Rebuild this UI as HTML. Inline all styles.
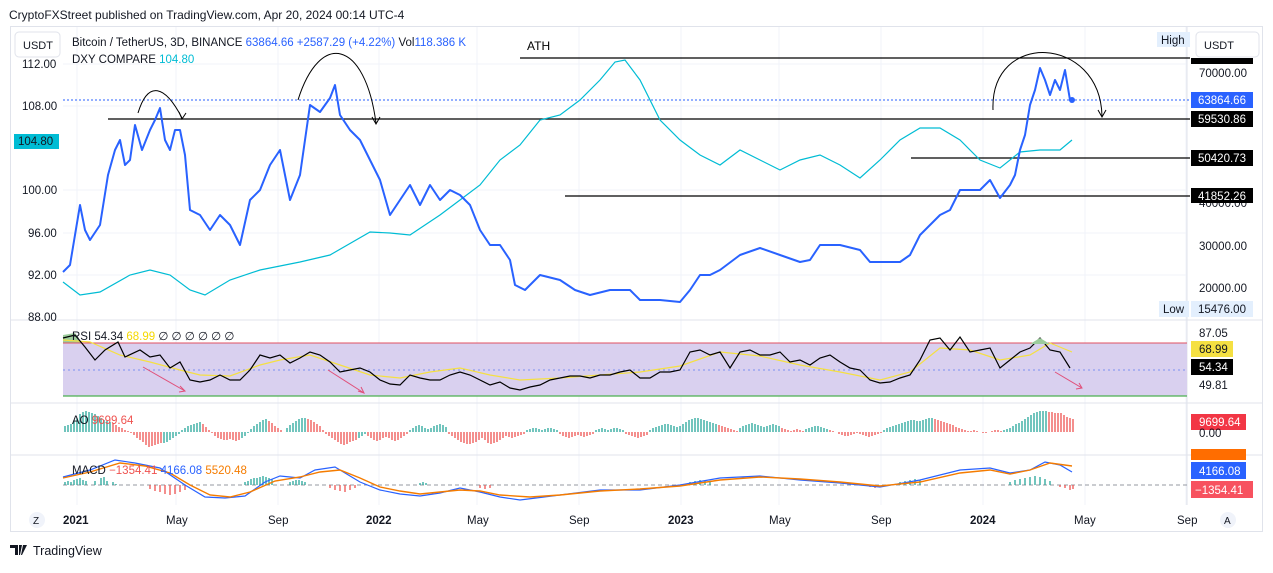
<!DOCTYPE html>
<html><head><meta charset="utf-8"><style>
body{margin:0;background:#fff;font-family:"Liberation Sans",sans-serif;}
svg text{font-family:"Liberation Sans",sans-serif;}
</style></head><body>
<svg width="1273" height="568" viewBox="0 0 1273 568" xmlns="http://www.w3.org/2000/svg">
<rect width="1273" height="568" fill="#fff"/>
<text x="9" y="19" font-size="12" fill="#131722">CryptoFXStreet published on TradingView.com, Apr 20, 2024 00:14 UTC-4</text>
<rect x="10.5" y="26.5" width="1252" height="505" fill="#fff" stroke="#e0e3eb"/>
<g stroke="#f0f3fa" stroke-width="1">
<line x1="77" y1="27" x2="77" y2="505"/><line x1="176" y1="27" x2="176" y2="505"/><line x1="278" y1="27" x2="278" y2="505"/><line x1="379" y1="27" x2="379" y2="505"/><line x1="477" y1="27" x2="477" y2="505"/><line x1="579" y1="27" x2="579" y2="505"/><line x1="681" y1="27" x2="681" y2="505"/><line x1="779" y1="27" x2="779" y2="505"/><line x1="881" y1="27" x2="881" y2="505"/><line x1="983" y1="27" x2="983" y2="505"/><line x1="1085" y1="27" x2="1085" y2="505"/><line x1="1186" y1="27" x2="1186" y2="505"/>
<line x1="63" y1="64" x2="1187" y2="64"/><line x1="63" y1="106" x2="1187" y2="106"/><line x1="63" y1="190" x2="1187" y2="190"/><line x1="63" y1="233" x2="1187" y2="233"/><line x1="63" y1="275" x2="1187" y2="275"/>
</g>
<g stroke="#e0e3eb"><line x1="11" y1="320" x2="1262" y2="320"/><line x1="11" y1="403" x2="1262" y2="403"/><line x1="11" y1="455" x2="1262" y2="455"/><line x1="1187" y1="27" x2="1187" y2="505"/></g>
<rect x="15" y="32" width="45" height="25" rx="4" fill="#fff" stroke="#e0e3eb"/>
<text x="23" y="49" font-size="11" fill="#131722">USDT</text>
<rect x="1196" y="32" width="63" height="25" rx="4" fill="#fff" stroke="#e0e3eb"/>
<text x="1204" y="49" font-size="11" fill="#131722">USDT</text>
<text x="72" y="46" font-size="11.5" fill="#131722">Bitcoin / TetherUS, 3D, BINANCE <tspan fill="#2962ff">63864.66  +2587.29 (+4.22%)</tspan> Vol<tspan fill="#2962ff">118.386 K</tspan></text>
<text x="72" y="63" font-size="11.5" fill="#131722">DXY COMPARE <tspan fill="#00bcd4">104.80</tspan></text>
<g font-size="11.5" fill="#131722">
<text x="22" y="68">112.00</text><text x="22" y="110">108.00</text><text x="22" y="194">100.00</text><text x="28" y="237">96.00</text><text x="28" y="279">92.00</text><text x="28" y="321">88.00</text>
</g>
<rect x="14" y="134" width="45" height="15" fill="#00bcd4"/><text x="18" y="145" font-size="11.5" fill="#131722">104.80</text>
<g stroke="#000" stroke-width="1.2">
<line x1="520" y1="58" x2="1190" y2="58"/><line x1="108" y1="119" x2="1190" y2="119"/><line x1="911" y1="158" x2="1190" y2="158"/><line x1="565" y1="196" x2="1190" y2="196"/>
</g>
<line x1="63" y1="100" x2="1190" y2="100" stroke="#2962ff" stroke-dasharray="2 2"/>
<text x="527" y="50" font-size="12" fill="#000">ATH</text>
<g fill="none" stroke="#000" stroke-width="1">
<path d="M138,113 C148,80 165,85 182,118"/><path d="M179,112 L182,119 L186,113"/>
<path d="M298,100 C320,30 365,40 376,123"/><path d="M372,117 L376,124 L380,117"/>
<path d="M993,110 C990,30 1100,35 1102,116"/><path d="M1098,110 L1102,117 L1106,110"/>
</g>
<polyline fill="none" stroke="#00bcd4" stroke-width="1.2" points="63,282 80,295 100,292 130,275 150,270 170,275 190,290 205,295 230,280 260,270 300,262 330,255 370,232 390,233 410,235 440,215 460,200 480,185 500,160 520,145 540,120 560,115 580,100 600,80 615,62 625,60 640,80 660,120 680,140 700,155 720,165 740,150 760,160 780,170 800,160 820,155 840,165 860,178 880,160 900,140 920,128 940,128 960,140 980,160 1000,168 1020,152 1040,150 1060,150 1072,140"/>
<polyline fill="none" stroke="#2962ff" stroke-width="2" stroke-linejoin="round" points="63,272 70,265 80,205 85,230 90,240 100,225 108,175 115,150 120,140 125,165 130,160 135,125 142,150 150,130 155,120 160,108 165,140 170,150 175,130 180,130 185,155 190,210 200,215 210,230 220,215 230,225 240,245 250,200 260,190 270,165 280,150 290,200 300,175 310,105 320,112 330,98 335,85 340,115 350,130 360,140 370,160 380,180 390,215 400,200 410,185 420,205 430,185 440,200 450,190 460,195 470,205 480,230 490,245 500,245 510,260 515,285 525,290 540,275 560,280 575,290 590,295 610,290 630,290 640,300 660,300 680,302 690,290 700,275 710,275 720,270 740,255 760,248 780,255 800,262 810,260 820,245 840,245 860,250 870,262 880,262 900,262 910,255 920,235 930,225 940,215 950,210 960,190 970,190 980,190 990,180 1000,198 1010,185 1015,175 1020,150 1025,135 1030,105 1035,90 1040,68 1045,80 1050,95 1055,80 1060,90 1065,70 1070,100 1072,100"/>
<circle cx="1072" cy="100" r="3" fill="#2962ff"/>
<rect x="1157" y="32" width="33" height="15" fill="#e3effd"/><text x="1161" y="44" font-size="11.5" fill="#131722">High</text>
<rect x="1191" y="58" width="62" height="6" fill="#000"/>
<g font-size="11.5" fill="#131722"><text x="1199" y="77">70000.00</text><text x="1199" y="207">40000.00</text><text x="1199" y="250">30000.00</text><text x="1199" y="292">20000.00</text></g>
<rect x="1191" y="92" width="62" height="16" fill="#2962ff"/><text x="1198" y="104" font-size="11.5" fill="#fff">63864.66</text>
<rect x="1191" y="111" width="62" height="16" fill="#000"/><text x="1198" y="123" font-size="11.5" fill="#fff">59530.86</text>
<rect x="1191" y="150" width="62" height="16" fill="#000"/><text x="1198" y="162" font-size="11.5" fill="#fff">50420.73</text>
<rect x="1191" y="188" width="62" height="15" fill="#000"/><text x="1198" y="200" font-size="11.5" fill="#fff">41852.26</text>
<rect x="1159" y="301" width="30" height="16" fill="#e3effd"/><text x="1163" y="313" font-size="11.5" fill="#131722">Low</text>
<rect x="1191" y="301" width="62" height="16" fill="#e3effd"/><text x="1198" y="313" font-size="11.5" fill="#131722">15476.00</text>
<rect x="63" y="343" width="1124" height="53" fill="#d9d0ef"/>
<path d="M63,343 L63,335 L75,333 L82,343 Z" fill="#9ccc9c"/>
<line x1="63" y1="343" x2="1187" y2="343" stroke="#e05060"/>
<line x1="63" y1="396" x2="1187" y2="396" stroke="#4caf50" stroke-width="1.2"/>
<line x1="63" y1="370" x2="1187" y2="370" stroke="#7b8ff0" stroke-dasharray="2 3"/>
<polyline fill="none" stroke="#f5e042" stroke-width="1.2" points="63,340 90,342 120,355 150,362 180,370 200,375 230,376 260,365 280,360 310,355 340,365 370,375 400,378 430,372 460,368 490,375 520,380 560,378 600,375 640,372 680,366 720,352 760,356 800,365 840,372 880,380 910,372 940,348 970,350 1000,360 1030,355 1050,343 1072,352"/>
<polyline fill="none" stroke="#000" stroke-width="1.2" points="63,338 75,335 85,347 95,360 105,350 118,342 125,357 140,350 150,357 160,355 170,368 180,362 190,380 200,382 210,380 220,375 230,380 240,380 250,370 260,355 270,358 280,355 290,363 300,358 310,352 320,355 330,362 340,372 350,370 360,368 370,372 380,380 390,384 400,385 410,375 420,378 430,380 440,380 450,375 460,372 470,375 480,380 490,385 500,382 510,388 520,390 530,387 540,385 550,380 560,378 570,376 580,376 590,378 600,375 610,375 620,372 630,370 640,378 650,378 660,372 670,372 680,370 690,352 700,350 710,355 720,352 730,368 740,352 750,350 760,355 770,355 780,352 790,362 800,360 810,365 820,358 830,355 840,362 850,368 860,370 870,380 880,383 890,382 900,378 910,375 920,360 930,340 940,338 950,350 960,337 970,352 980,350 990,348 1000,368 1010,360 1020,352 1030,348 1040,338 1050,350 1060,352 1070,368"/>
<path d="M1030,344 L1040,338 L1050,344 Z" fill="#9ccc9c" stroke="none"/>
<g stroke="#e0507a" fill="none" stroke-width="1"><path d="M143,367 L185,391 M180,386 L185,391 L179,392"/><path d="M328,370 L364,393 M358,391 L364,393 L361,387"/><path d="M1055,372 L1082,388 M1076,389 L1082,388 L1079,383"/></g>
<text x="72" y="340" font-size="11.5" fill="#131722">RSI 54.34 <tspan fill="#f5d800">68.99</tspan> ∅ ∅ ∅ ∅ ∅ ∅</text>
<g font-size="11.5" fill="#131722"><text x="1199" y="337">87.05</text><text x="1199" y="389">49.81</text></g>
<rect x="1191" y="341" width="42" height="16" fill="#f5e042"/><text x="1199" y="353" font-size="11.5" fill="#131722">68.99</text>
<rect x="1191" y="359" width="42" height="16" fill="#000"/><text x="1199" y="371" font-size="11.5" fill="#fff">54.34</text>
<g stroke-width="1.3">
<path stroke="#26a69a" d="M65,432V426M68,432V425M71,432V424M74,432V420M77,432V418M80,432V414M83,432V412M86,432V411M89,432V412M92,432V413M95,432V414M98,432V416M101,432V418M104,432V420M107,432V421M110,432V422"/>
<path stroke="#ef5350" d="M113,432V423M116,432V425M119,432V427M122,432V428M125,432V430M128,432V431M131,432V433M134,432V435M137,432V438M140,432V440M143,432V442M146,432V445M149,432V447M152,432V446M155,432V445M158,432V444M161,432V443"/>
<path stroke="#26a69a" d="M164,432V443M167,432V442M170,432V440M173,432V438M176,432V436M179,432V434M182,432V430"/>
<path stroke="#26a69a" d="M185,432V428M188,432V426M191,432V425M194,432V424M197,432V423M200,432V422"/>
<path stroke="#ef5350" d="M203,432V424M206,432V427M209,432V430M212,432V433M215,432V436M218,432V438M221,432V439M224,432V440M227,432V440M230,432V439M233,432V440M236,432V441M239,432V440"/>
<path stroke="#26a69a" d="M242,432V438M245,432V436M248,432V433M251,432V429M254,432V426M257,432V424M260,432V422M263,432V420M266,432V419"/>
<path stroke="#ef5350" d="M269,432V421M272,432V423M275,432V426M278,432V428M281,432V430M284,432V432"/>
<path stroke="#26a69a" d="M287,432V428M290,432V425M293,432V423M296,432V421M299,432V419M302,432V418M305,432V418"/>
<path stroke="#ef5350" d="M308,432V419M311,432V420M314,432V422M317,432V424M320,432V426M323,432V430M326,432V434M329,432V436M332,432V438M335,432V440M338,432V442M341,432V444M344,432V445M347,432V444M350,432V442M353,432V441M356,432V440"/>
<path stroke="#26a69a" d="M359,432V438M362,432V436M365,432V434"/>
<path stroke="#ef5350" d="M368,432V436M371,432V438M374,432V440M377,432V441M380,432V440M383,432V438M386,432V437M389,432V438M392,432V440M395,432V441M398,432V440M401,432V438M404,432V436M407,432V434"/>
<path stroke="#26a69a" d="M410,432V430M413,432V428M416,432V426M419,432V425M422,432V426M425,432V428M428,432V429M431,432V428M434,432V426M437,432V425M440,432V424M443,432V425M446,432V427"/>
<path stroke="#ef5350" d="M449,432V434M452,432V436M455,432V438M458,432V440M461,432V442M464,432V443M467,432V444M470,432V444M473,432V443M476,432V442M479,432V440M482,432V438M485,432V440M488,432V443M491,432V444M494,432V443M497,432V442M500,432V440M503,432V438M506,432V436M509,432V437M512,432V438M515,432V437M518,432V436M521,432V435M524,432V434"/>
<path stroke="#26a69a" d="M527,432V430M530,432V429M533,432V428M536,432V428M539,432V429M542,432V430M545,432V429M548,432V428M551,432V428M554,432V429M557,432V430"/>
<path stroke="#ef5350" d="M560,432V434M563,432V436M566,432V437M569,432V438M572,432V437M575,432V436M578,432V435M581,432V436M584,432V437M587,432V436M590,432V435M593,432V434"/>
<path stroke="#26a69a" d="M596,432V430M599,432V429M602,432V428M605,432V429M608,432V430M611,432V429M614,432V428M617,432V428M620,432V429M623,432V430"/>
<path stroke="#ef5350" d="M626,432V434M629,432V435M632,432V436M635,432V437M638,432V438M641,432V437M644,432V436M647,432V435"/>
<path stroke="#26a69a" d="M650,432V430M653,432V428M656,432V427M659,432V426M662,432V425M665,432V424M668,432V424M671,432V425M674,432V426M677,432V427M680,432V426M683,432V424M686,432V422M689,432V420M692,432V419M695,432V418M698,432V418M701,432V419M704,432V420M707,432V421M710,432V422M713,432V423M716,432V424"/>
<path stroke="#ef5350" d="M719,432V425M722,432V426M725,432V427M728,432V428M731,432V429M734,432V430M737,432V431"/>
<path stroke="#26a69a" d="M740,432V428M743,432V426M746,432V425M749,432V424M752,432V423M755,432V424M758,432V425M761,432V426M764,432V427M767,432V426M770,432V425M773,432V424M776,432V425M779,432V426"/>
<path stroke="#ef5350" d="M782,432V428M785,432V429M788,432V430M791,432V431M794,432V430M797,432V429M800,432V430M803,432V431"/>
<path stroke="#26a69a" d="M806,432V429M809,432V428M812,432V427M815,432V426M818,432V426M821,432V427M824,432V428M827,432V429"/>
<path stroke="#ef5350" d="M830,432V430M833,432V431M836,432V432M839,432V434M842,432V435M845,432V436M848,432V436M851,432V435M854,432V434M857,432V433M860,432V434M863,432V435M866,432V436M869,432V437M872,432V436M875,432V435M878,432V434M881,432V433"/>
<path stroke="#26a69a" d="M884,432V430M887,432V428M890,432V427M893,432V426M896,432V425M899,432V424M902,432V423M905,432V422M908,432V421M911,432V420M914,432V420M917,432V421M920,432V421M923,432V420M926,432V419M929,432V418M932,432V418"/>
<path stroke="#ef5350" d="M935,432V419M938,432V420M941,432V421M944,432V422M947,432V423M950,432V424M953,432V425M956,432V427M959,432V428M962,432V429M965,432V430M968,432V431M971,432V431M974,432V430M977,432V431M980,432V432M983,432V433M986,432V433M989,432V432M992,432V431M995,432V430M998,432V430M1001,432V431"/>
<path stroke="#26a69a" d="M1004,432V430M1007,432V429M1010,432V428M1013,432V426M1016,432V424M1019,432V423M1022,432V421M1025,432V419M1028,432V417M1031,432V415M1034,432V413M1037,432V412M1040,432V411M1043,432V411M1046,432V411"/>
<path stroke="#ef5350" d="M1049,432V412M1052,432V412M1055,432V413M1058,432V413M1061,432V413M1064,432V415M1067,432V417M1070,432V418M1073,432V419"/>
</g>
<text x="72" y="424" font-size="11.5" fill="#131722">AO <tspan fill="#ef5350">9699.64</tspan></text>
<rect x="1191" y="414" width="55" height="16" fill="#f23645"/><text x="1199" y="426" font-size="11.5" fill="#fff">9699.64</text>
<text x="1199" y="437" font-size="11.5" fill="#131722">0.00</text>
<line x1="63" y1="485" x2="1187" y2="485" stroke="#9598a1" stroke-dasharray="4 3"/>
<g stroke-width="1.3">
<path stroke="#26a69a" d="M65,485V482M68,485V481M71,485V482M74,485V480M77,485V479M80,485V478M83,485V480M86,485V481M95,485V481M101,485V478M104,485V477M107,485V481M113,485V482M116,485V484M245,485V482M248,485V481M251,485V479M254,485V478M257,485V478M260,485V477M263,485V476M266,485V477M269,485V478M272,485V479M290,485V482M293,485V481M296,485V480M299,485V480M302,485V481M305,485V482M420,485V483M423,485V482M426,485V483M690,485V482M695,485V481M700,485V480M705,485V481M710,485V482M900,485V482M905,485V481M910,485V480M915,485V479M920,485V480M1010,485V482M1015,485V480M1020,485V479M1025,485V478M1030,485V477M1035,485V476M1040,485V477M1045,485V479M1050,485V481"/>
<path stroke="#ef5350" d="M150,485V489M155,485V491M160,485V492M165,485V494M170,485V495M175,485V494M180,485V492M185,485V490M330,485V488M335,485V490M340,485V491M345,485V492M350,485V490M355,485V488M480,485V488M485,485V489M490,485V488M870,485V487M875,485V488M1060,485V487M1065,485V488M1070,485V490M1073,485V489"/>
</g>
<polyline fill="none" stroke="#2962ff" stroke-width="1.2" points="63,477 90,470 115,460 135,463 160,468 185,485 205,497 225,498 245,496 265,482 280,476 300,478 315,470 335,467 360,482 380,490 400,494 420,496 440,493 460,488 480,492 500,497 520,500 560,495 600,490 640,490 680,485 720,478 760,476 800,480 840,483 880,487 920,480 960,470 990,468 1010,473 1030,470 1045,462 1060,465 1072,472"/>
<polyline fill="none" stroke="#f57c00" stroke-width="1.4" points="63,478 90,472 120,463 145,466 170,473 190,485 210,495 230,497 250,492 275,481 300,477 320,472 340,470 360,478 380,487 400,491 420,494 440,492 460,490 480,491 500,495 530,497 560,495 600,491 640,489 680,486 720,480 760,477 800,479 840,482 880,486 920,482 960,473 990,470 1010,474 1030,470 1050,463 1072,466"/>
<text x="72" y="474" font-size="11.5" fill="#131722">MACD <tspan fill="#ef5350">−1354.41</tspan> <tspan fill="#2962ff">4166.08</tspan> <tspan fill="#f57c00">5520.48</tspan></text>
<rect x="1191" y="449" width="55" height="11" fill="#ff6d00"/>
<rect x="1191" y="462" width="55" height="17" fill="#2962ff"/><text x="1199" y="475" font-size="11.5" fill="#fff">4166.08</text>
<rect x="1191" y="481" width="62" height="17" fill="#f7525f"/><text x="1195" y="494" font-size="11.5" fill="#fff">−1354.41</text>
<circle cx="37" cy="520" r="8" fill="#f0f3fa"/><text x="33" y="524" font-size="10" fill="#131722">Z</text>
<circle cx="1228" cy="520" r="8" fill="#f0f3fa"/><text x="1224" y="524" font-size="10" fill="#131722">A</text>
<g font-size="11.5" fill="#131722">
<text x="63" y="524" font-weight="bold">2021</text><text x="166" y="524">May</text><text x="268" y="524">Sep</text><text x="366" y="524" font-weight="bold">2022</text><text x="467" y="524">May</text><text x="569" y="524">Sep</text><text x="668" y="524" font-weight="bold">2023</text><text x="769" y="524">May</text><text x="871" y="524">Sep</text><text x="970" y="524" font-weight="bold">2024</text><text x="1074" y="524">May</text><text x="1177" y="524">Sep</text>
</g>
<path d="M10,545h8v10h-3v-7h-5z M19,545h3l-2,10h-1z M23,545h4l-5,10h-1z" fill="#131722"/>
<text x="33" y="555" font-size="12.5" fill="#131722">TradingView</text>
</svg>
</body></html>
